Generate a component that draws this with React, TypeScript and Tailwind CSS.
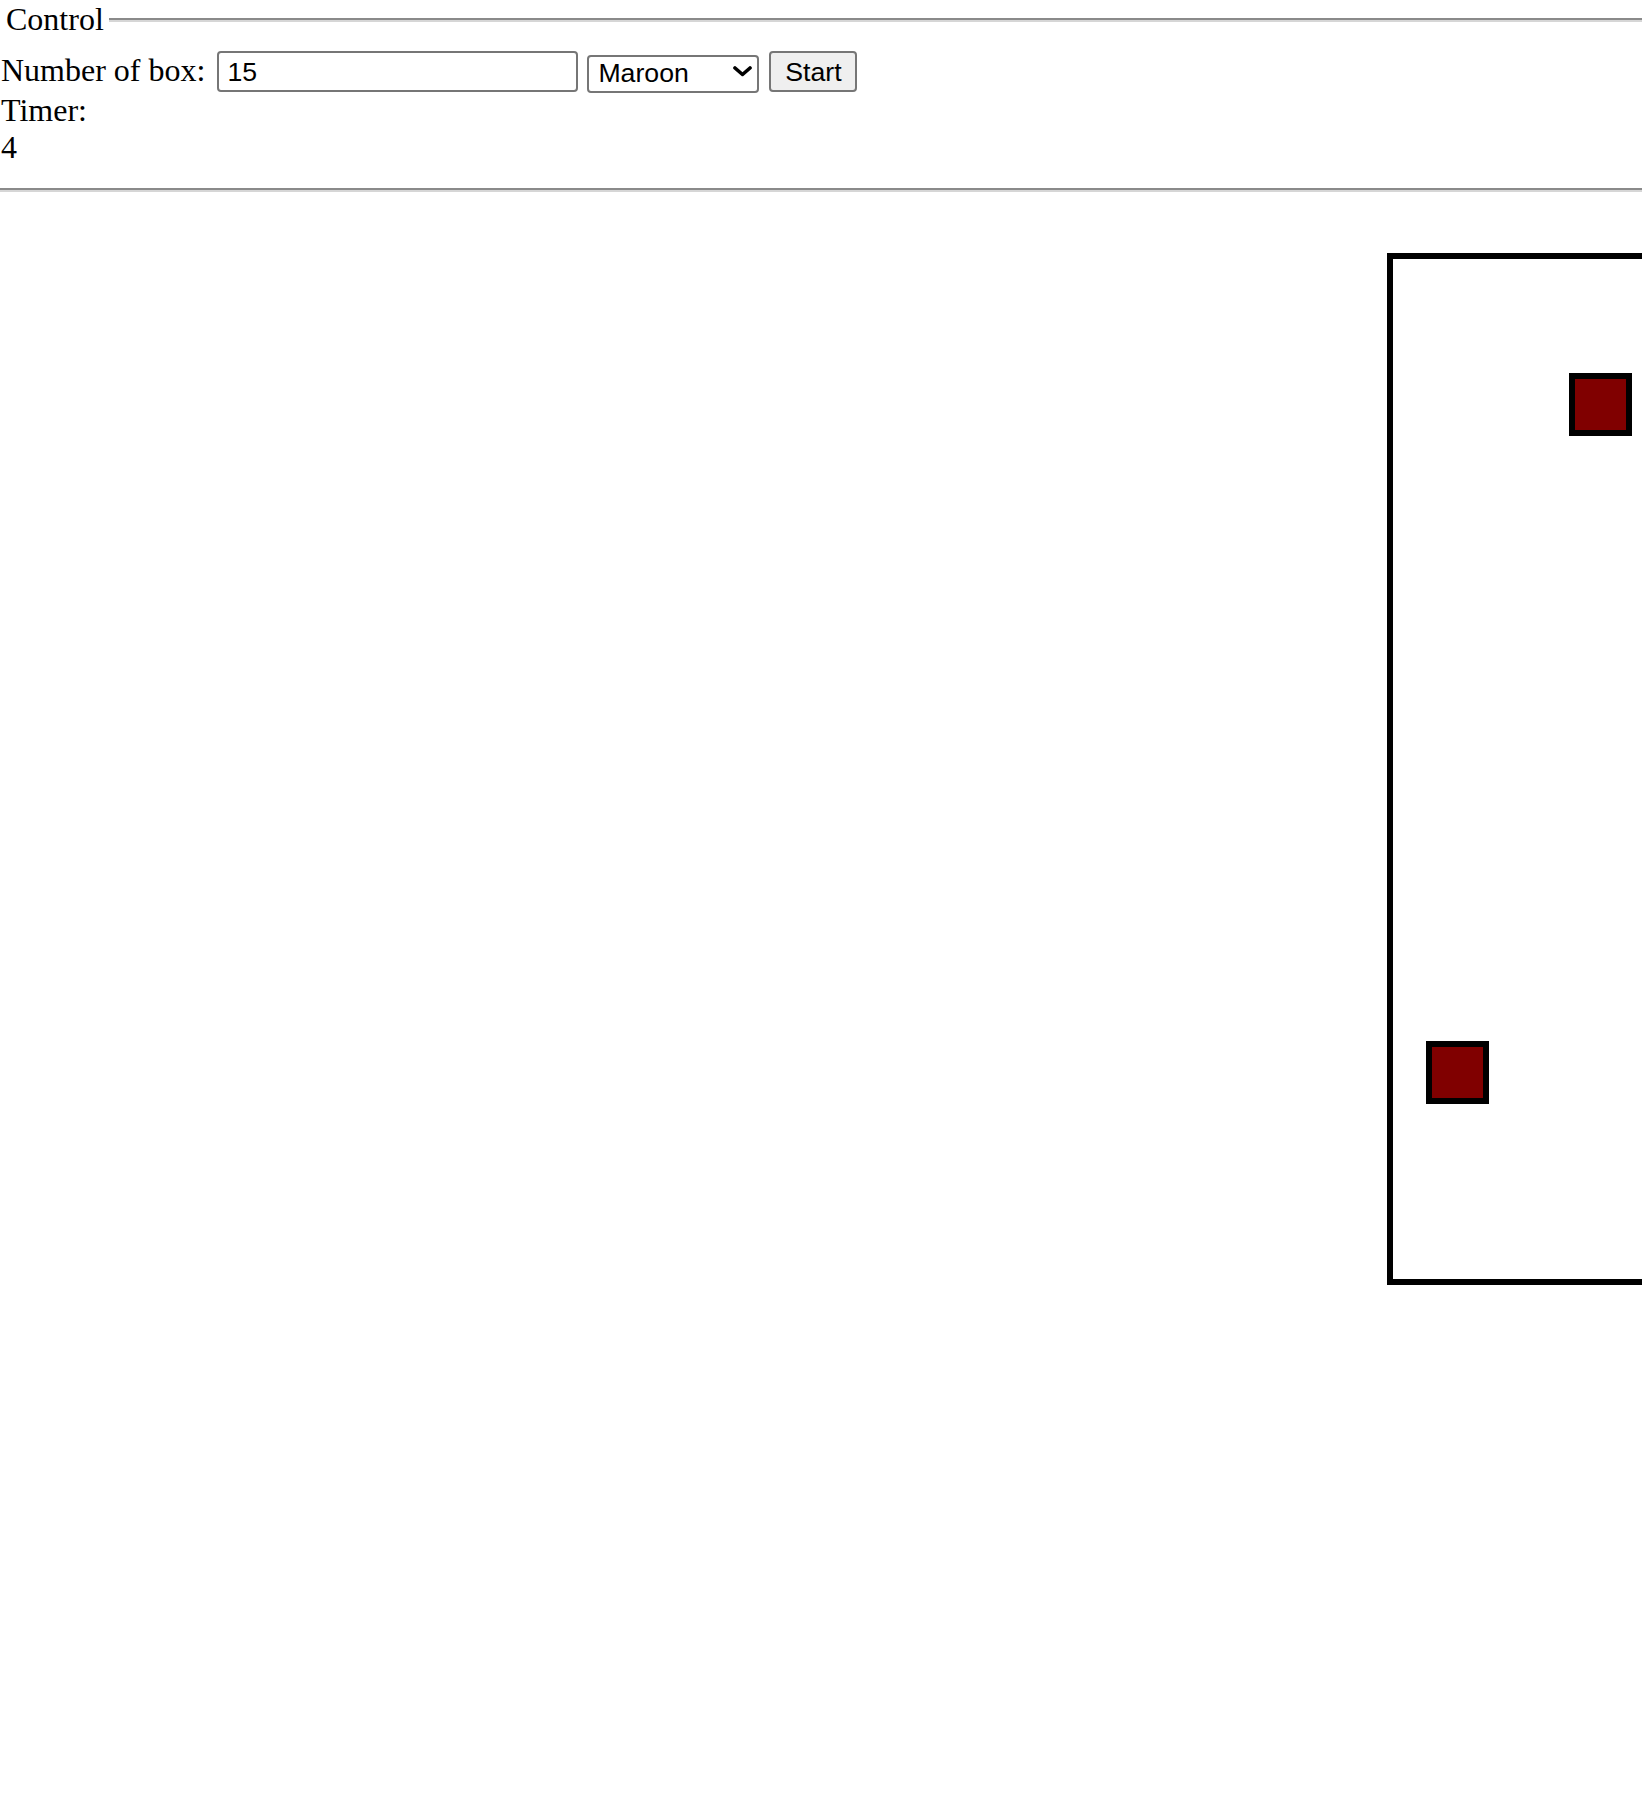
import React, { useState } from 'react';

const Groove: React.FC<{ className?: string }> = ({ className = '' }) => (
  <div className={`h-[4px] border-t-2 border-b-2 border-t-[#8a8a8a] border-b-[#d6d6d6] ${className}`} />
);

type Box = { left: number; top: number };

const boxes: Box[] = [
  { left: 176, top: 114 },
  { left: 33, top: 782 },
];

export default function App() {
  const [count, setCount] = useState('15');
  const [color, setColor] = useState('Maroon');

  return (
    <div className="w-[1642px] min-h-[1804px] overflow-hidden bg-white text-black font-['Liberation_Serif',serif] text-[32px] leading-[36.8px]">
      {/* control panel */}
      <div>
        <div className="flex items-start h-[40px]">
          <span className="pl-[6px] pt-[1px]">Control</span>
          <Groove className="flex-1 ml-[5px] mt-[18px]" />
        </div>

        <div className="flex items-start h-[44px] mt-[8px]">
          <span className="pl-[1px] mt-[4px]">Number of box:</span>
          <input
            type="text"
            value={count}
            onChange={(e) => setCount(e.target.value)}
            className="ml-[12px] mt-[3px] w-[361px] h-[41px] border-2 border-[#767676] rounded-[4px] px-[8px] pt-[2px] bg-white font-['Liberation_Sans',sans-serif] text-[26.67px] leading-none outline-none"
          />
          <div className="relative ml-[9px] mt-[5px]">
            <select
              value={color}
              onChange={(e) => setColor(e.target.value)}
              className="appearance-none w-[172px] h-[38px] border-2 border-[#767676] rounded-[4px] pl-[9px] pb-[2px] bg-white font-['Liberation_Sans',sans-serif] text-[26.67px] leading-none outline-none"
            >
              <option>Maroon</option>
              <option>Navy</option>
              <option>Green</option>
            </select>
            <svg
              className="pointer-events-none absolute left-[146px] top-[13px]"
              width="19"
              height="11"
              viewBox="0 0 19 11"
            >
              <path d="M2 2 L9.5 8.5 L17 2" fill="none" stroke="#000" strokeWidth="3.6" strokeLinecap="round" strokeLinejoin="round" />
            </svg>
          </div>
          <button className="ml-[10px] mt-[3px] w-[88px] h-[41px] pt-[2px] bg-[#efefef] border-2 border-[#767676] rounded-[4px] font-['Liberation_Sans',sans-serif] text-[26.67px] leading-none">
            Start
          </button>
        </div>

        <div className="pl-[1px]">Timer:</div>
        <div className="pl-[1px]">4</div>

        <Groove className="mt-[22px]" />
      </div>

      {/* play area */}
      <div className="relative ml-[1387px] mt-[61px] w-[600px] h-[1032px] border-[6px] border-black">
        {boxes.map((b, i) => (
          <div
            key={i}
            className="absolute w-[63px] h-[63px] border-[6px] border-black bg-[#800000]"
            style={{ left: b.left, top: b.top }}
          />
        ))}
      </div>
    </div>
  );
}
